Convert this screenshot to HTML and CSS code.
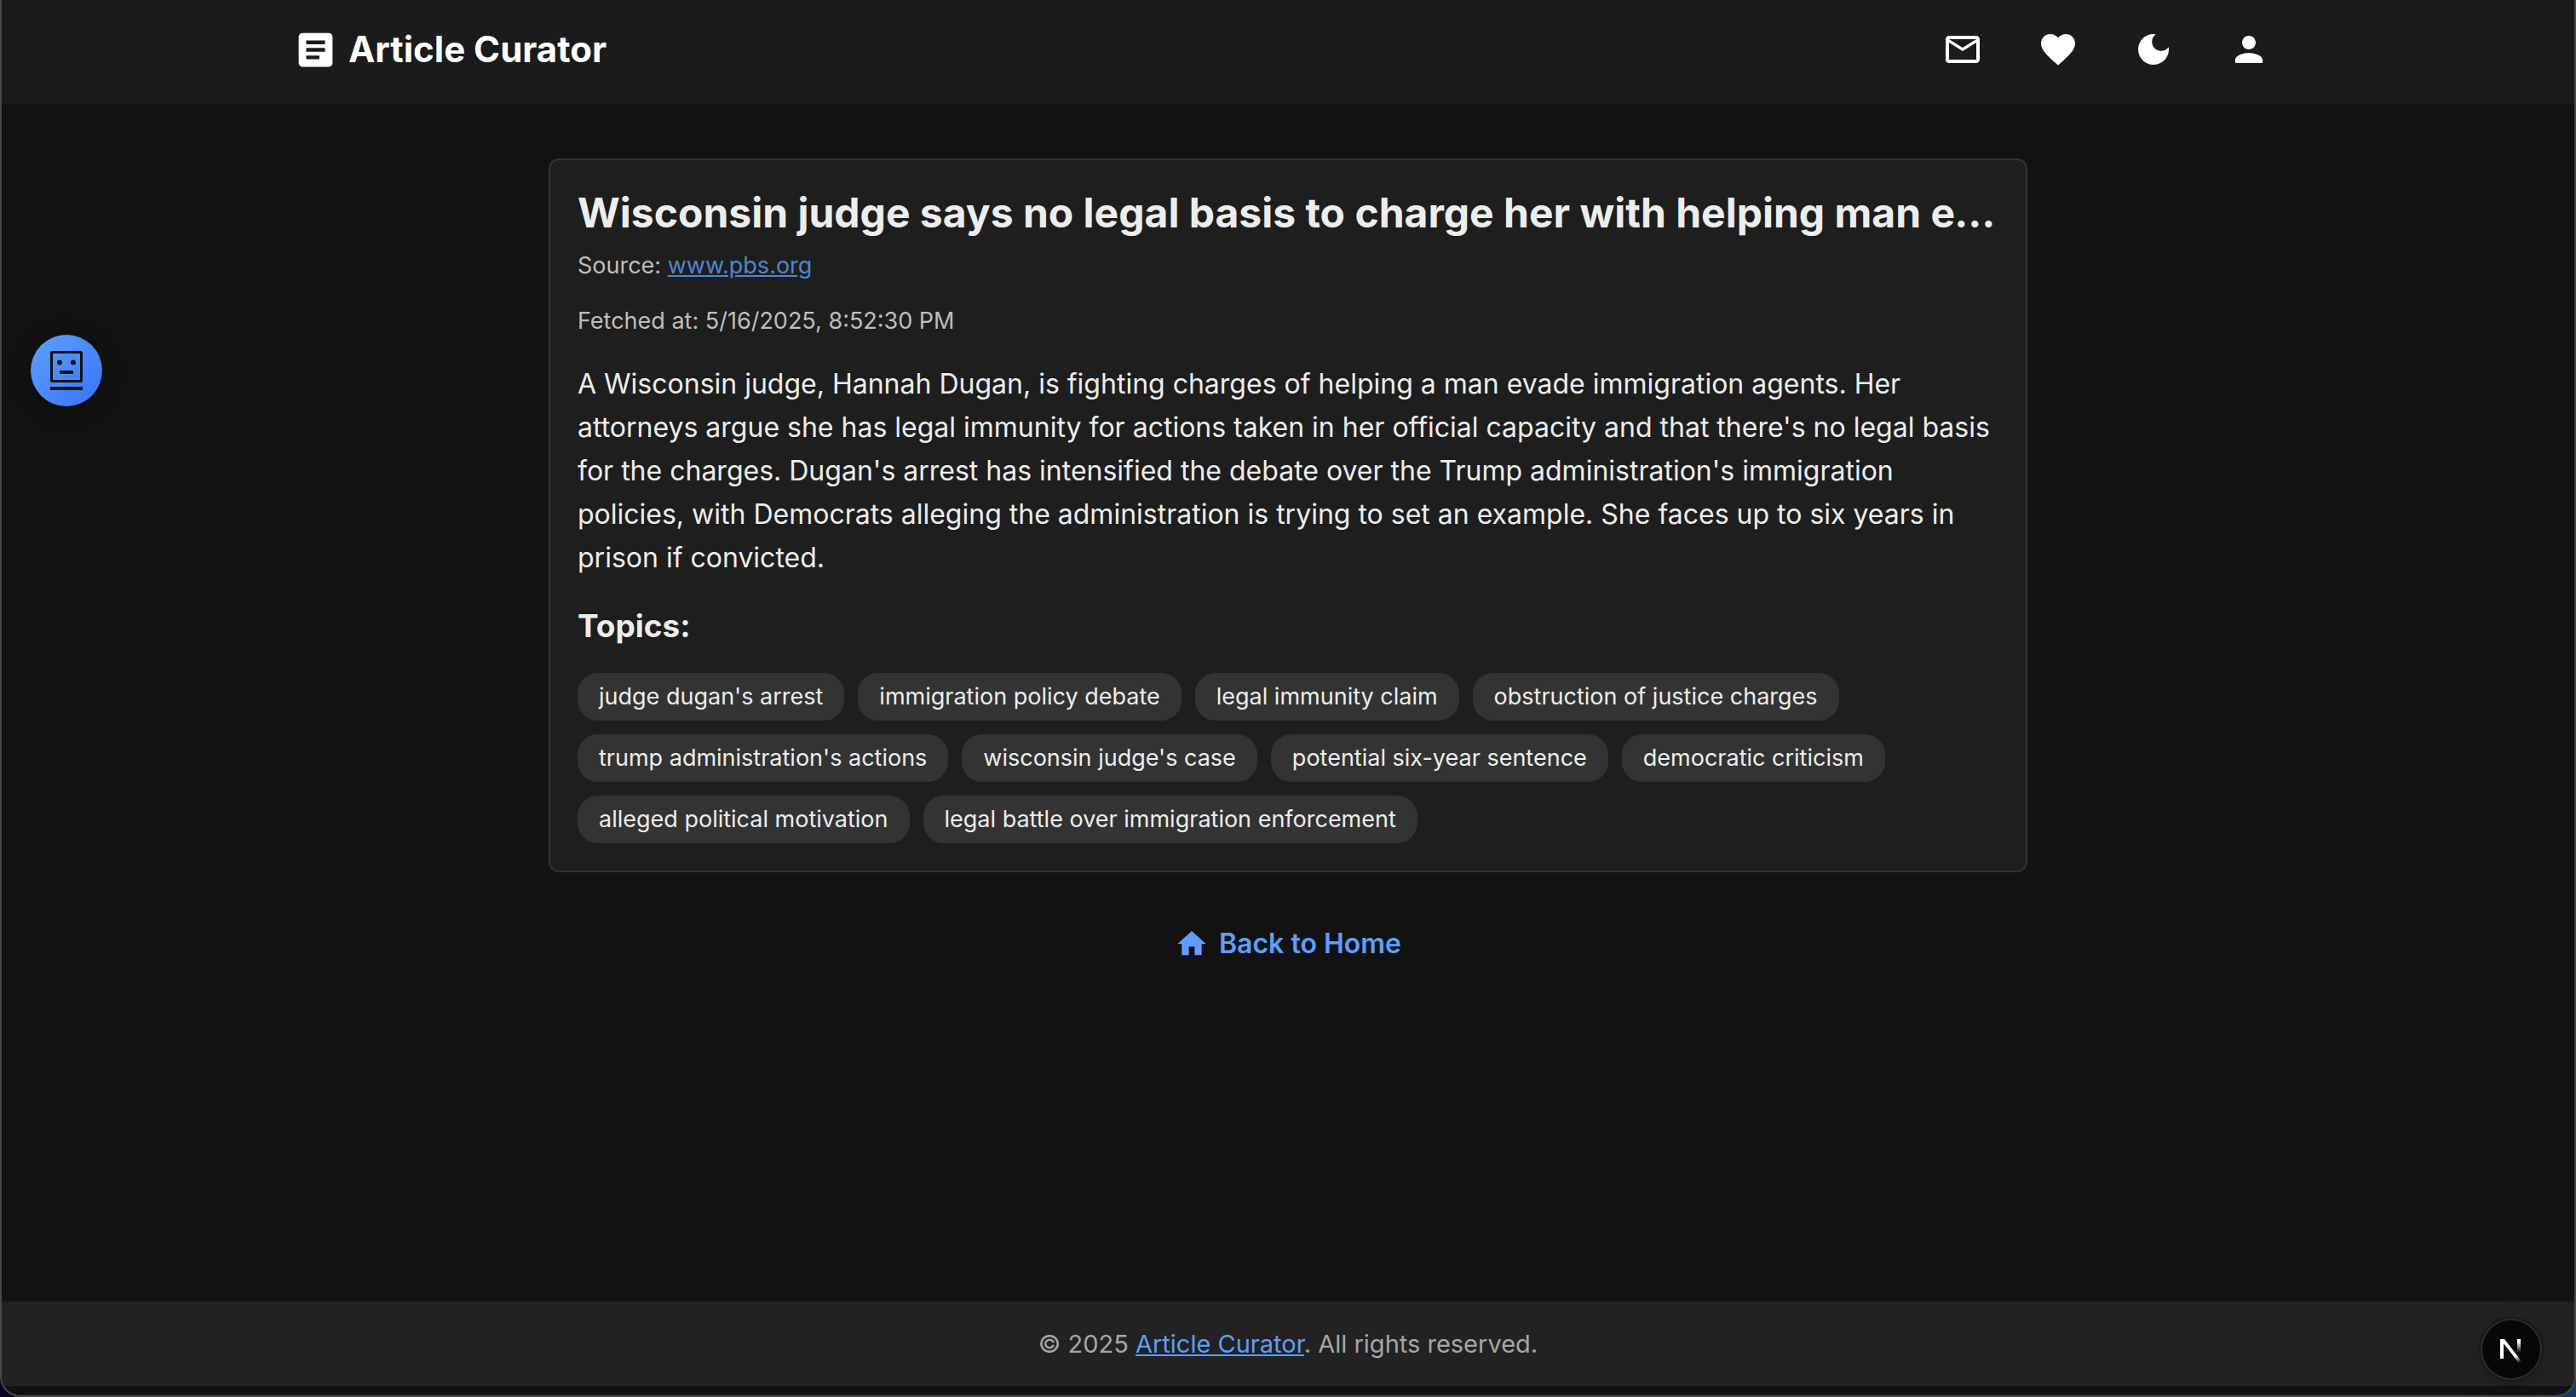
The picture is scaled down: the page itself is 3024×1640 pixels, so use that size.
FILE: index.html
```html
<!DOCTYPE html>
<html lang="en">
<head>
<meta charset="utf-8">
<title>Article Curator</title>
<link rel="stylesheet" href="styles.css">
</head>
<body>
<div class="window">
  <header class="header">
    <div class="header-inner">
      <a class="brand" href="#">
        <svg class="brand-icon" viewBox="0 0 24 24" aria-hidden="true"><path d="M19 3H5c-1.1 0-2 .9-2 2v14c0 1.1.9 2 2 2h14c1.1 0 2-.9 2-2V5c0-1.1-.9-2-2-2zm-5 14H7v-2h7v2zm3-4H7v-2h10v2zm0-4H7V7h10v2z"/></svg>
        <span>Article Curator</span>
      </a>
      <nav class="nav" aria-label="Main">
        <button class="icon-button" type="button" aria-label="Newsletter"><svg viewBox="0 0 24 24"><path d="M22 6c0-1.100-.9-2-2-2H4c-1.100 0-2 .9-2 2v12c0 1.100.9 2 2 2h16c1.100 0 2-.9 2-2V6zm-2 0-8 5-8-5h16zm0 12H4V8l8 5 8-5v10z"/></svg></button>
        <button class="icon-button" type="button" aria-label="Favorites"><svg viewBox="0 0 24 24"><path d="m12 21.350-1.450-1.320C5.400 15.360 2 12.280 2 8.500 2 5.420 4.420 3 7.500 3c1.740 0 3.410.81 4.500 2.090C13.090 3.810 14.760 3 16.500 3 19.580 3 22 5.420 22 8.500c0 3.780-3.400 6.860-8.550 11.540L12 21.350z"/></svg></button>
        <button class="icon-button" type="button" aria-label="Dark mode"><svg viewBox="0 0 24 24"><path d="M12 3c-4.970 0-9 4.030-9 9s4.030 9 9 9 9-4.030 9-9c0-.46-.04-.92-.1-1.360-.98 1.370-2.580 2.260-4.400 2.260-2.980 0-5.400-2.420-5.400-5.400 0-1.810.89-3.420 2.260-4.400-.44-.06-.9-.1-1.360-.1z"/></svg></button>
        <button class="icon-button" type="button" aria-label="Account"><svg viewBox="0 0 24 24"><path d="M12 12c2.210 0 4-1.790 4-4s-1.790-4-4-4-4 1.790-4 4 1.790 4 4 4zm0 2c-2.670 0-8 1.340-8 4v2h16v-2c0-2.660-5.330-4-8-4z"/></svg></button>
      </nav>
    </div>
  </header>

  <main class="main">
    <article class="card">
      <h1 class="card-title">Wisconsin judge says no legal basis to charge her with helping man evade immigration agents</h1>
      <p class="meta">Source: <a href="#">www.pbs.org</a></p>
      <p class="meta">Fetched at: 5/16/2025, 8:52:30 PM</p>
      <p class="summary">A Wisconsin judge, Hannah Dugan, is fighting charges of helping a man evade immigration agents. Her attorneys argue she has legal immunity for actions taken in her official capacity and that there's no legal basis for the charges. Dugan's arrest has intensified the debate over the Trump administration's immigration policies, with Democrats alleging the administration is trying to set an example. She faces up to six years in prison if convicted.</p>
      <h2 class="topics-title">Topics:</h2>
      <ul class="topics">
        <li>judge dugan's arrest</li>
        <li>immigration policy debate</li>
        <li>legal immunity claim</li>
        <li>obstruction of justice charges</li>
        <li>trump administration's actions</li>
        <li>wisconsin judge's case</li>
        <li>potential six-year sentence</li>
        <li>democratic criticism</li>
        <li>alleged political motivation</li>
        <li>legal battle over immigration enforcement</li>
      </ul>
    </article>
    <a class="back" href="#">
      <svg viewBox="0 0 24 24" aria-hidden="true"><path d="M10 20v-6h4v6h5v-8h3L12 3 2 12h3v8z"/></svg>
      <span>Back to Home</span>
    </a>
  </main>

  <footer class="footer">
    <p>© 2025 <a href="#">Article Curator</a>. All rights reserved.</p>
  </footer>

  <button class="assistant" type="button" aria-label="Open assistant">
    <svg viewBox="0 0 38 46"><rect x="1.500" y="1.500" width="35" height="34" rx="1"/><path d="M11 25h16M0 44h38"/><circle cx="11" cy="13.500" r="3"/><circle cx="27" cy="13.500" r="3"/></svg>
  </button>

  <button class="devtools" type="button" aria-label="Open developer tools">
    <svg viewBox="0 -4 26 32">
      <defs>
        <linearGradient id="leg" gradientUnits="userSpaceOnUse" x1="14" y1="16" x2="24" y2="27"><stop offset="0.400" stop-color="#fff"/><stop offset="1" stop-color="#fff" stop-opacity="0"/></linearGradient>
        <linearGradient id="stem" gradientUnits="userSpaceOnUse" x1="0" y1="0" x2="0" y2="16"><stop offset="0.200" stop-color="#fff"/><stop offset="1" stop-color="#fff" stop-opacity="0"/></linearGradient>
      </defs>
      <path fill="#fff" d="M0 0h4v23H0z"/>
      <path fill="url(#leg)" d="M0 0h5l20 26-3 2L3 4z"/>
      <path fill="url(#stem)" d="M20 0h4v16h-4z"/>
    </svg>
  </button>
</div>
</body>
</html>
```
FILE: styles.css
```css
* {
  box-sizing: border-box;
}

body {
  margin: 0;
  background: linear-gradient(90deg, #0a0424, #1a3868);
  font-family: Inter, "Liberation Sans", sans-serif;
  color: #ededed;
}

h1, h2, p, ul {
  margin: 0;
  padding: 0;
}

button {
  padding: 0;
  border: 0;
  background: none;
  color: inherit;
  cursor: pointer;
}

svg {
  display: block;
  fill: currentColor;
}

a {
  color: #5e9eff;
}

.window {
  display: flex;
  flex-direction: column;
  min-height: 100vh;
  padding-bottom: 11px;
  border: 2px solid #484848;
  border-top: 0;
  border-radius: 0 0 24px 24px;
  background: #121212;
  overflow: hidden;
}

.header {
  padding: 18px 0 24px;
  background: #1b1b1b;
}

.header-inner {
  display: flex;
  align-items: center;
  justify-content: space-between;
  max-width: 2400px;
  margin: 0 auto;
  padding: 0 32px;
}

.brand {
  display: flex;
  align-items: center;
  gap: 12px;
  color: #fff;
  font-size: 42px;
  line-height: 64px;
  font-weight: 700;
  text-decoration: none;
}

.brand-icon {
  width: 53px;
  height: 53px;
}

.nav {
  display: flex;
  gap: 32px;
  color: #fff;
}

.icon-button {
  padding: 16px;
}

.icon-button svg {
  width: 48px;
  height: 48px;
}

.main {
  flex: 1;
  display: flex;
  flex-direction: column;
  align-items: center;
  padding: 64px 32px;
}

.card {
  width: 100%;
  max-width: 1736px;
  padding: 32px;
  border: 2px solid #333;
  border-radius: 12px;
  background: #1e1e1e;
}

.card-title {
  margin-bottom: 16px;
  overflow: hidden;
  font-size: 48px;
  line-height: 59px;
  font-weight: 700;
  text-overflow: ellipsis;
  white-space: nowrap;
}

.meta {
  margin-bottom: 32px;
  color: #bebebe;
  font-size: 27px;
  line-height: 33px;
}

.meta a {
  color: #4f86d4;
}

.summary {
  margin-bottom: 32px;
  font-size: 32px;
  line-height: 51px;
}

.topics-title {
  margin-bottom: 32px;
  font-size: 37px;
  line-height: 46px;
  font-weight: 700;
}

.topics {
  display: flex;
  flex-wrap: wrap;
  gap: 16px;
  list-style: none;
}

.topics li {
  padding: 12px 25px;
  border-radius: 24px;
  background: #333;
  font-size: 27px;
  line-height: 32px;
}

.back {
  display: flex;
  align-items: center;
  gap: 12px;
  margin-top: 64px;
  font-size: 32px;
  line-height: 40px;
  font-weight: 600;
  text-decoration: none;
}

.back svg {
  width: 40px;
  height: 40px;
}

.footer {
  padding: 24px 32px;
  background: #222;
  color: #a6a6a6;
  font-size: 29px;
  line-height: 51px;
  text-align: center;
}

.assistant {
  position: fixed;
  top: 393px;
  left: 36px;
  display: flex;
  align-items: center;
  justify-content: center;
  width: 84px;
  height: 84px;
  border-radius: 50%;
  background: linear-gradient(135deg, #60a0fc, #3474f8);
  box-shadow: 0 4px 24px rgba(0, 0, 0, 0.3);
  color: #121212;
}

.assistant svg {
  width: 38px;
  height: 46px;
}

.assistant rect,
.assistant path {
  fill: none;
  stroke: currentColor;
  stroke-width: 4;
}

.assistant rect {
  stroke-width: 3;
}

.devtools {
  position: fixed;
  right: 40px;
  bottom: 20px;
  display: flex;
  align-items: center;
  justify-content: center;
  width: 72px;
  height: 72px;
  border: 2px solid #2c2c2c;
  border-radius: 50%;
  background: #070707;
  box-shadow: 0 0 0 2px #181818, 0 8px 32px rgba(0, 0, 0, 0.16);
}

.devtools svg {
  width: 26px;
  height: 32px;
}
```
